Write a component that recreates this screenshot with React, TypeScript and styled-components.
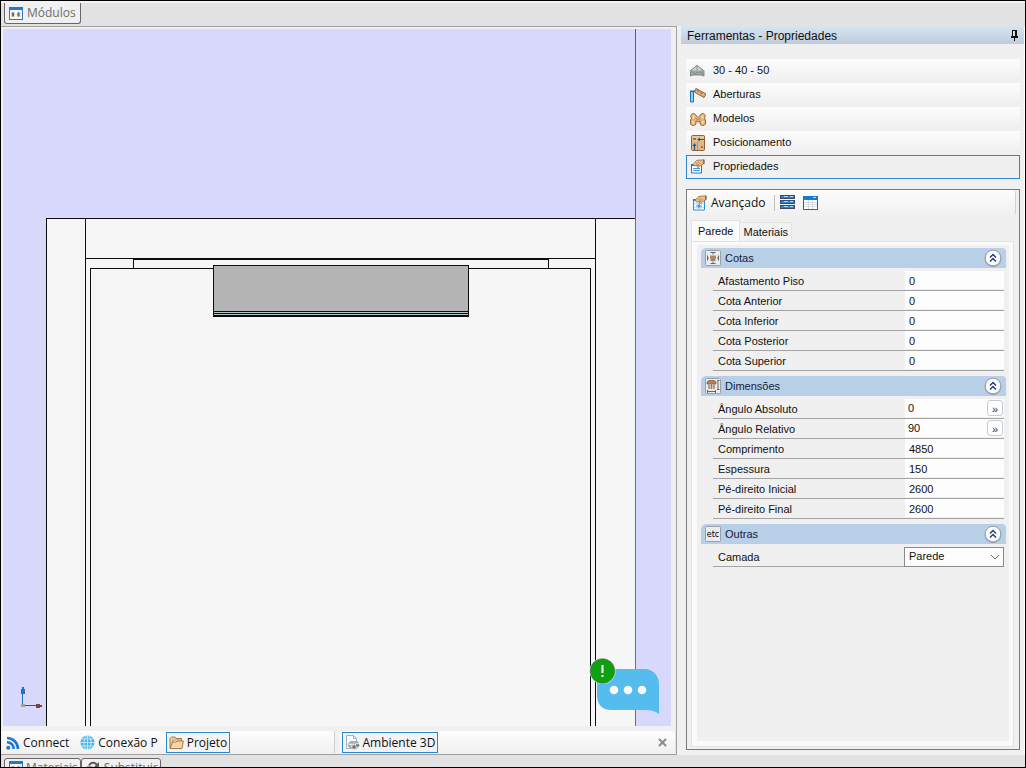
import React from 'react';
import styled, { createGlobalStyle, css } from 'styled-components';

const Global = createGlobalStyle`
  *, *::before, *::after { box-sizing: border-box; }
  body { margin: 0; color: #111; font-family: "Liberation Sans", Arial, sans-serif; font-size: 12px; }
  button, input, select { font: inherit; color: inherit; }
  h1, h2 { margin: 0; font-size: 12px; font-weight: 400; }
  svg { display: block; flex: none; }
`;

const Window = styled.div`
  display: flex;
  flex-direction: column;
  height: 100vh;
  min-height: 640px;
  overflow: hidden;
  border: 1px solid #000;
  background: #e2e2e2;
`;

const DockStrip = styled.div<{ $end?: boolean }>`
  flex: none;
  display: flex;
  gap: ${p => (p.$end ? 0 : 1)}px;
  height: ${p => (p.$end ? 12 : 25)}px;
  padding: ${p => (p.$end ? '3px 3px 0' : '0 3px 2px')};
  border-top: ${p => (p.$end ? 'none' : '2px solid #f3f3f3')};
  overflow: hidden;
`;

const DockTab = styled.button<{ $end?: boolean }>`
  display: flex;
  align-items: center;
  gap: ${p => (p.$end ? 3 : 4)}px;
  height: ${p => (p.$end ? 19 : 21)}px;
  padding: 0 ${p => (p.$end ? 2 : 4)}px 0 4px;
  border: 1px solid #6b6468;
  border-radius: ${p => (p.$end ? '3px 3px 0 0' : '0 0 3px 3px')};
  border-top-width: ${p => (p.$end ? 1 : 0)}px;
  background: #f0f0f0;
  color: #6d6d6d;
  font-family: "Open Sans", sans-serif;
  font-size: 12px;
  line-height: 16px;
  white-space: nowrap;
`;

const Main = styled.div`
  flex: 1;
  min-height: 0;
  display: flex;
`;

const Workspace = styled.main`
  flex: 1;
  min-width: 0;
  display: flex;
  flex-direction: column;
  border: solid #a0a0a0;
  border-width: 1px 1px 1px 0;
  background: #f0f0f0;
`;

const Viewport = styled.div`
  position: relative;
  flex: 1;
  min-height: 0;
  margin: 2px 5px 5px 2px;
  background: #d8d8fd;
  overflow: hidden;
  > svg { width: 100%; height: 100%; }
`;

const ChatButton = styled.button`
  position: absolute;
  right: 11px;
  bottom: 10px;
  padding: 0;
  border: 0;
  background: none;
`;

const DocBar = styled.div`
  flex: none;
  display: flex;
  height: 23px;
  gap: 4px;
`;

const DocGroup = styled.div<{ $first?: boolean }>`
  flex: 1;
  display: flex;
  align-items: center;
  padding: ${p => (p.$first ? '0 4px 0 2px' : '0 7px 0 3px')};
  gap: 5px;
  border-right: 1px solid ${p => (p.$first ? '#cfcfcf' : '#e4e4e4')};
  border-radius: 0 3px 3px 0;
  background: linear-gradient(#fdfdfd, #f0f0f0);
`;

const DocButton = styled.button<{ $active?: boolean }>`
  display: flex;
  align-items: center;
  gap: 3px;
  height: 21px;
  padding: 0 2px;
  border: 1px solid ${p => (p.$active ? '#2a86cf' : 'transparent')};
  background: ${p => (p.$active ? '#f3f3f3' : 'none')};
  font-family: "Open Sans", sans-serif;
  font-size: 12px;
  line-height: 18px;
  white-space: nowrap;
`;

const CloseButton = styled.button`
  margin-left: auto;
  padding: 1px;
  border: 0;
  background: none;
`;

const Side = styled.aside`
  flex: none;
  width: 348px;
  display: flex;
  flex-direction: column;
  padding: 0 0 5px 4px;
  border-right: 1px solid #fff;
  background: #f0f0f0;
`;

const SideHeader = styled.header`
  flex: none;
  display: flex;
  align-items: center;
  justify-content: space-between;
  height: 18px;
  padding: 0 5px 0 6px;
  background: linear-gradient(#d9e4f1, #bfcbd9);
  > h1 { line-height: 14px; padding-top: 2px; }
`;

const ToolNav = styled.nav`
  flex: none;
  display: flex;
  flex-direction: column;
  margin: 15px 4px 0 5px;
`;

const ToolLink = styled.button<{ $active?: boolean }>`
  display: flex;
  align-items: center;
  gap: 7px;
  height: 24px;
  padding: 0 3px;
  border: 1px solid transparent;
  background: linear-gradient(#fcfcfc, #efefef) border-box;
  font-size: 11px;
  line-height: 14px;
  text-align: left;
  > span { padding-bottom: 2px; }
  ${p => p.$active && css`
    border-color: #2a86cf;
    background: #f0f0f0;
  `}
`;

const Sheet = styled.section`
  flex: 1;
  min-height: 0;
  display: flex;
  flex-direction: column;
  margin: 10px 4px 0 5px;
  border: 1px solid #7a7a7a;
  padding: 0 5px 2px 4px;
`;

const Toolbar = styled.div`
  flex: none;
  display: flex;
  align-items: center;
  height: 25px;
  margin: 0 -2px 0 -4px;
  padding-left: 5px;
  border-right: 1px solid #d0d0d0;
  border-radius: 0 3px 3px 0;
  background: linear-gradient(#fdfdfd, #f0f0f0);
`;

const ToolButton = styled.button`
  display: flex;
  align-items: center;
  gap: 3px;
  margin-right: 8px;
  padding: 0;
  border: 0;
  background: none;
  font-family: "Open Sans", sans-serif;
  font-size: 12px;
  line-height: 18px;
`;

const Divider = styled.span`
  width: 1px;
  height: 16px;
  margin-right: 5px;
  background: #bdbdbd;
`;

const Tabs = styled.div`
  flex: none;
  display: flex;
  align-items: flex-end;
  height: 26px;
`;

const Tab = styled.button<{ $active?: boolean }>`
  height: ${p => (p.$active ? 21 : 19)}px;
  padding: 0 ${p => (p.$active ? 6 : 3)}px;
  border: 1px solid #e3e3e3;
  border-width: 1px 1px 0 ${p => (p.$active ? 1 : 0)}px;
  background: ${p => (p.$active ? '#fafafa' : '#f2f2f2')};
  font-size: 11px;
  line-height: 16px;
`;

const TabPage = styled.div`
  flex: 1;
  min-height: 0;
  display: flex;
  border: 1px solid #e3e3e3;
  padding: 3px 4px 5px 5px;
  background: #fafafa;
`;

const Scroller = styled.div`
  flex: 1;
  padding: 3px 3px 0 4px;
  overflow: hidden;
  background: #f0f0f0;
`;

const Group = styled.section`
  margin-bottom: 5px;
`;

const GroupHeader = styled.header`
  display: flex;
  align-items: center;
  gap: 4px;
  height: 20px;
  padding: 0 4px;
  border-radius: 5px 4px 0 0;
  background: #b8cfe8;
  > h2 { flex: 1; font-size: 11px; line-height: 18px; color: #152238; }
`;

const IconButton = styled.button`
  padding: 0;
  border: 0;
  background: none;
`;

const Rows = styled.div`
  padding: 3px 2px 0 12px;
`;

const Row = styled.div`
  display: flex;
  height: 20px;
  border-bottom: 1px solid #a3a3a3;
  > label {
    flex: 1;
    padding-left: 5px;
    font-size: 11px;
    line-height: 20px;
  }
`;

const Value = styled.div`
  display: flex;
  align-items: center;
  width: 99px;
  height: 18px;
  background: #fdfdfd;
`;

const Field = styled.input<{ $short?: boolean }>`
  flex: 1;
  min-width: 0;
  height: 18px;
  padding: ${p => (p.$short ? '0 3px' : '2px 4px 0')};
  border: 0;
  outline: 0;
  background: none;
  font-size: 11px;
`;

const MoreButton = styled.button`
  width: 16px;
  height: 16px;
  margin-right: 1px;
  padding: 0;
  border: 1px solid #c4ccd6;
  border-radius: 3px;
  background: #fdfdfd;
  color: #333;
  font-size: 11px;
  line-height: 16px;
`;

const SelectBox = styled.div`
  position: relative;
  width: 100px;
  height: 20px;
  > svg { position: absolute; right: 4px; top: 7px; pointer-events: none; }
`;

const Select = styled.select`
  appearance: none;
  width: 100%;
  height: 20px;
  padding: 0 4px 2px;
  border: 1px solid #8a8a8a;
  border-radius: 0;
  background: #fdfdfd;
  font-size: 11px;
`;

const PanelIcon = () => (
  <svg width="14" height="13" viewBox="0 0 14 13">
    <rect x="0.5" y="0.5" width="13" height="12" fill="#f8f8f8" stroke="#2b7cc8" />
    <path d="M0 0h14v3H0z" fill="#1c7ad0" />
    <path d="M2 5h4v5H2zM8 5h4v5H8z" fill="#e2e0da" />
    <ellipse cx="4" cy="7.500" rx="1.200" ry="2.200" fill="#7b6c5c" />
    <ellipse cx="9.500" cy="7.500" rx="1.200" ry="2.200" fill="#7b6c5c" />
  </svg>
);
const SwapIcon = () => (
  <svg width="15" height="14" viewBox="0 0 15 14" fill="none" stroke="#5c5c5c" strokeWidth="2">
    <path d="M3 4.500C5 1 9 1 11 4" /><path d="M13 1v5H8z" fill="#5c5c5c" stroke="none" />
    <rect x="1" y="6" width="5" height="4" fill="#c9a184" stroke="#7d5a48" strokeWidth="1" />
    <path d="M12 9c-2 4-6 4-8 1" />
  </svg>
);
const FeedIcon = () => (
  <svg width="14" height="14" viewBox="0 0 14 14" fill="none" stroke="#1b78cf" strokeWidth="2.600">
    <circle cx="2.300" cy="11.700" r="2" fill="#1b78cf" stroke="none" />
    <path d="M1 6.300A6.500 6.500 0 0 1 7.700 13M1 2A11 11 0 0 1 12 13" />
  </svg>
);
const GlobeIcon = () => (
  <svg width="15" height="15" viewBox="0 0 15 15">
    <circle cx="7.500" cy="7.500" r="7" fill="#4db4e8" />
    <g fill="none" stroke="#d8f0fc" strokeWidth="0.800">
      <ellipse cx="7.500" cy="7.500" rx="3.500" ry="7" />
      <path d="M7.500 0v15M0 7.500h15M1.500 4h12M1.500 11h12" />
    </g>
  </svg>
);
const FolderIcon = () => (
  <svg width="15" height="14" viewBox="0 0 15 14" stroke="#a9793f" strokeLinejoin="round">
    <path d="M1 12V2.500L2.500 1H6l1 1.500h5.500V12z" fill="#edcf9b" />
    <path d="M4 4h9v6H4z" fill="#fff8e8" strokeWidth="0.700" />
    <path d="M1 12.500 3.500 6H7l1-1h6.300L13 12.500z" fill="#f2d6a6" />
  </svg>
);
const SceneIcon = () => (
  <svg width="15" height="15" viewBox="0 0 15 15">
    <path d="M1.500 0.500h7l3 3v10h-10z" fill="#f7fafd" stroke="#9db4ca" />
    <path d="M8.500 0.500v3h3" fill="none" stroke="#9db4ca" />
    <path d="M3 9 6 6.500 13 7l1 4-4 3-6-2z" fill="#b4babf" stroke="#858c93" strokeWidth="0.800" />
    <path d="M3 9l6 1 5-2" stroke="#eceff1" fill="none" />
    <circle cx="9" cy="12" r="2.300" fill="#94674b" stroke="#d9dde0" />
    <path d="M11 9.500h3v1.500h-3z" fill="#2d7dc2" />
  </svg>
);
const PinIcon = () => (
  <svg width="9" height="11" viewBox="0 0 9 11" shapeRendering="crispEdges" fill="#111">
    <path d="M2 0h5v7H2zM1 6h7v2H1zM4 8h1v3H4z" /><path d="M3 1h2v5H3z" fill="#d7e0eb" />
  </svg>
);
const WallIcon = () => (
  <svg width="16" height="16" viewBox="0 0 16 16">
    <path d="M0.500 7.500 7 2l7 5.500V13l-3.500-1h-7l-3 1z" fill="#9ea59e" />
    <path d="M1.500 7 7 2.500 12.500 7 7 8z" fill="#d0d4d0" />
    <path d="M7 2.500V8M0.500 7.500 7 2.500l6.500 5" fill="none" stroke="#858c87" strokeWidth="0.900" />
    <path d="M0.500 7.500V13l3-1h7l3.500 1V7.500" fill="none" stroke="#7c837d" strokeWidth="0.900" />
    <path d="M3 9.500h1M6 9.500h1M5 11h1M9 9.500h1M11 9.500h1M12 11h1" stroke="#7c837d" />
  </svg>
);
const OpeningIcon = () => (
  <svg width="16" height="16" viewBox="0 0 16 16">
    <path d="M0.500 4.500h3V15h-3z" fill="#8ccdf2" stroke="#1b74b8" />
    <path d="M0 3.500h6V5H0z" fill="#1b74b8" />
    <path d="m6 1.500 10 5.500-2 3.500L4.500 5z" fill="#e2b57c" stroke="#80502a" strokeWidth="0.900" />
    <path d="m7 3.500 7 4.300" stroke="#97653a" strokeWidth="1.200" strokeDasharray="2 2" />
  </svg>
);
const ModelIcon = () => (
  <svg width="16" height="16" viewBox="0 0 16 16">
    <path d="M3.500 2.500C1.500 2.500.5 4 1 6l.5 1.500L.5 9v3c0 2 1.500 2.500 3 2.500s2.500-.8 2.500-2.500v-2l2 1 2-1v2c0 1.700 1 2.500 2.500 2.500s3-.5 3-2.500V9l-1-1.500L15 6c.5-2-.5-3.500-2.500-3.500C10.500 2.500 10 5 8 6.500 6 5 5.500 2.500 3.500 2.500z" fill="#e3b27a" stroke="#9b6836" />
    <path d="M3.500 4.500v3M12.500 4.500v3M3.300 10v2.500M12.700 10v2.500" stroke="#f8e1bf" strokeWidth="1.800" fill="none" />
    <path d="m5.500 7 2.500 2L10.500 7" stroke="#b98247" fill="none" />
  </svg>
);
const PositionIcon = () => (
  <svg width="16" height="16" viewBox="0 0 16 16">
    <rect x="1.500" y="0.500" width="13" height="15" rx="1" fill="#dfb888" stroke="#8f6238" />
    <path d="M2 1h12v5H2z" fill="#e9c799" />
    <path d="M3 3h3v2H3zM11 11h2v2h-2z" fill="#a27044" />
    <path d="M14 4.500H8M4.500 15v-5" stroke="#155a9c" strokeWidth="1.200" />
    <path d="M7 4.500l3-2v4zM4.500 8l-2 3h4z" fill="#155a9c" />
    <path d="M7.500 7v8" stroke="#c2905b" />
  </svg>
);
const Hand = () => (
  <>
    <path d="M3 5.500 6.500 1.500 10 1h4v3.500L11 6.500 8.500 8.500 7 8l1.500-2L5 7z" fill="#e9bf8c" stroke="#a9784a" strokeWidth="0.900" />
    <path d="M6 5 9 3M8 6l3-2" stroke="#b07f50" strokeWidth="0.700" />
    <path d="M13 0.500h1.500V5H13z" fill="#77736f" />
  </>
);
const PropsIcon = () => (
  <svg width="16" height="16" viewBox="0 0 16 16">
    <path d="M1.500 5.500h10v8.500h-10z" fill="#fff" stroke="#1b78cf" /><path d="M1 5h11v2H1z" fill="#1b78cf" />
    <path d="M3 9.500h7M3 11.500h7" stroke="#4598dc" /><Hand />
  </svg>
);
const AdvancedIcon = () => (
  <svg width="16" height="16" viewBox="0 0 16 16">
    <path d="M1.500 4.500h11v10.500h-11z" fill="#f2faff" stroke="#2c8cd8" />
    <path d="M1 4h12v2H1z" fill="#1b78cf" />
    <path d="M5 6v9M9.500 6v9M2 8.500h10M2 12.500h10" stroke="#b4dcf6" strokeWidth="0.800" />
    <path d="M7 8.500v5M4.500 11h5" stroke="#1b78cf" /><Hand />
  </svg>
);
const StackIcon = () => (
  <svg width="15" height="15" viewBox="0 0 15 15" shapeRendering="crispEdges">
    {[0, 5, 10].map(y => (
      <g key={y}>
        <path d={`M0 ${y}h15v4H0z`} fill="#45476a" />
        <path d={`M1 ${y + 1}h13v2H1z`} fill="#1b8ae0" />
        <path d={`M4 ${y + 1}h4v1H4zM10 ${y + 1}h3v1h-3z`} fill="#a4dcfa" />
      </g>
    ))}
  </svg>
);
const GridIcon = () => (
  <svg width="15" height="14" viewBox="0 0 15 14" shapeRendering="crispEdges">
    <path d="M0 0h15v14H0z" fill="#55577c" /><path d="M0 0h15v4H0z" fill="#1b7ad0" />
    <path d="M10 1h3v1h-3z" fill="#b9e3fb" /><path d="M1 4h13v9H1z" fill="#fff" />
    <path d="M5 4h1v9H5zM9 4h1v9H9zM1 6h13v1H1zM1 8h13v1H1zM1 10h13v1H1z" fill="#d5dbe3" />
  </svg>
);
const Plate = ({ children }: { children: React.ReactNode }) => (
  <svg width="16" height="16" viewBox="0 0 16 16">
    <rect x="0.500" y="0.500" width="15" height="15" rx="1" fill="#ececec" stroke="#9aa0a6" />
    {children}
  </svg>
);
const QuotaIcon = () => (
  <Plate>
    <path d="M5.500 2.500h5M8 2.500v2M5.500 13.500h5M8 11.500v2M2.500 5.500v5M2.500 8H4M13.500 5.500v5M12 8h1.500" stroke="#666" />
    <rect x="5.500" y="6" width="5" height="5" fill="#94857a" /><path d="M5 5.500h6v3H5z" fill="#b88560" />
  </Plate>
);
const SizeIcon = () => (
  <Plate>
    <path d="M2 4l2-1.500h5L11 4v2H2z" fill="#b5805a" stroke="#7a6253" strokeWidth="0.800" />
    <path d="M3 6h7v5H3z" fill="#d2c3b9" /><path d="M4 6v5M6.500 6v5M9 6v5" stroke="#8f7c70" />
    <path d="M2 13.500h9M2.500 12v3M10.500 12v3M13 2.500v9M12 2.500h2.500M12 11.500h2.500" stroke="#666" fill="none" />
  </Plate>
);
const EtcIcon = () => (
  <Plate>
    <text x="8" y="11" textAnchor="middle" fontFamily="DejaVu Sans, sans-serif" fontSize="8" fill="#000">etc</text>
  </Plate>
);
const CollapseIcon = () => (
  <svg width="18" height="18" viewBox="0 0 18 18">
    <circle cx="9" cy="9.500" r="8.400" fill="#8d99a8" /><circle cx="9" cy="9" r="7.800" fill="#fcfcfc" stroke="#98a3b0" />
    <path d="m6 8.500 3-3 3 3M6 12.500l3-3 3 3" fill="none" stroke="#23407f" strokeWidth="1.500" />
  </svg>
);

const FloorPlan = () => (
  <svg viewBox="0 0 668 697" preserveAspectRatio="xMidYMin slice" shapeRendering="crispEdges" aria-hidden="true">
    <path d="M43 189h589v508H43z" fill="#f6f6f6" />
    <g fill="#0c0c0c">
      <path d="M43 189h589v1H43zM43 189h1v508h-1zM82 189h1v508h-1zM592 189h1v508h-1z" />
      <path d="M82 229h511v1H82zM130 229h416v2H130zM130 229h1v11h-1zM545 229h1v11h-1z" />
      <path d="M87 239h501v1H87zM87 239h1v458h-1zM587 239h1v458h-1z" />
      <path d="M210 236h256v52H210z" />
    </g>
    <path d="M211 237h254v45H211z" fill="#b4b4b4" />
    <path d="M211 283h254v1H211zM211 285h254v1H211z" fill="#b7c6c8" />
    <path d="M632 0h1v189h-1z" fill="#4a6e5c" />
    <path d="M632 189h1v508h-1z" fill="#2f9a3c" />
    <path d="M19 663h1v14h-1zM18 660h4v5h-4zM19 658h2v2h-2z" fill="#2272bd" />
    <path d="M20 676h14v1H20zM33 675h4v4h-4zM37 676h2v2h-2z" fill="#74463f" />
    <path d="M18 675h4v3h-4z" fill="#a0a0a0" />
  </svg>
);

const ChatIcon = () => (
  <svg width="72" height="58" viewBox="0 0 72 58">
    <path d="M22 11h35c8 0 14 7 14 15v30c-4-3-8-4-13-4H23C14 52 9 46 9 37V25c0-8 6-14 13-14z" fill="#55bdee" />
    <g fill="#fafafa"><circle cx="26" cy="32" r="4.300" /><circle cx="40" cy="32" r="4.300" /><circle cx="54" cy="32" r="4.300" /></g>
    <circle cx="14.500" cy="13" r="13" fill="#e8f4e8" /><circle cx="14.500" cy="13" r="12.300" fill="#0fa012" stroke="#4f6b4f" strokeWidth="0.600" />
    <path d="M13.500 7h2v8h-2zM13.500 17h2v2h-2z" fill="#f4fff4" />
  </svg>
);

const tools = [
  { name: '30 - 40 - 50', Icon: WallIcon },
  { name: 'Aberturas', Icon: OpeningIcon },
  { name: 'Modelos', Icon: ModelIcon },
  { name: 'Posicionamento', Icon: PositionIcon },
  { name: 'Propriedades', Icon: PropsIcon, active: true },
];

type Item = { label: string; value: string; more?: boolean; options?: string[] };
const groups: { title: string; Icon: () => React.JSX.Element; items: Item[] }[] = [
  {
    title: 'Cotas', Icon: QuotaIcon, items: [
      { label: 'Afastamento Piso', value: '0' },
      { label: 'Cota Anterior', value: '0' },
      { label: 'Cota Inferior', value: '0' },
      { label: 'Cota Posterior', value: '0' },
      { label: 'Cota Superior', value: '0' },
    ],
  },
  {
    title: 'Dimensões', Icon: SizeIcon, items: [
      { label: 'Ângulo Absoluto', value: '0', more: true },
      { label: 'Ângulo Relativo', value: '90', more: true },
      { label: 'Comprimento', value: '4850' },
      { label: 'Espessura', value: '150' },
      { label: 'Pé-direito Inicial', value: '2600' },
      { label: 'Pé-direito Final', value: '2600' },
    ],
  },
  { title: 'Outras', Icon: EtcIcon, items: [{ label: 'Camada', value: 'Parede', options: ['Parede'] }] },
];

function PropertyRow({ item }: { item: Item }) {
  const id = React.useId();
  return (
    <Row>
      <label htmlFor={id}>{item.label}</label>
      {item.options ? (
        <SelectBox>
          <Select id={id} defaultValue={item.value}>
            {item.options.map(o => <option key={o}>{o}</option>)}
          </Select>
          <svg width="10" height="6" viewBox="0 0 10 6"><path d="m1 1 4 4 4-4" fill="none" stroke="#666" /></svg>
        </SelectBox>
      ) : (
        <Value>
          <Field id={id} defaultValue={item.value} $short={item.more} />
          {item.more && <MoreButton>»</MoreButton>}
        </Value>
      )}
    </Row>
  );
}

export default function App() {
  return (
    <>
      <Global />
      <Window>
        <DockStrip>
          <DockTab><PanelIcon />Módulos</DockTab>
        </DockStrip>
        <Main>
          <Workspace>
            <Viewport>
              <FloorPlan />
              <ChatButton aria-label="Chat"><ChatIcon /></ChatButton>
            </Viewport>
            <DocBar>
              <DocGroup $first>
                <DocButton><FeedIcon />Connect</DocButton>
                <DocButton><GlobeIcon />Conexão P</DocButton>
                <DocButton $active><FolderIcon />Projeto</DocButton>
              </DocGroup>
              <DocGroup>
                <DocButton $active><SceneIcon />Ambiente 3D</DocButton>
                <CloseButton aria-label="Fechar">
                  <svg width="9" height="9" viewBox="0 0 9 9"><path d="m1 1 7 7M8 1 1 8" stroke="#8c8c8c" strokeWidth="2" /></svg>
                </CloseButton>
              </DocGroup>
            </DocBar>
          </Workspace>
          <Side>
            <SideHeader><h1>Ferramentas - Propriedades</h1><PinIcon /></SideHeader>
            <ToolNav>
              {tools.map(({ name, Icon, active }) => (
                <ToolLink key={name} $active={active}><Icon /><span>{name}</span></ToolLink>
              ))}
            </ToolNav>
            <Sheet>
              <Toolbar>
                <ToolButton><AdvancedIcon />Avançado</ToolButton>
                <Divider />
                <ToolButton aria-label="Lista"><StackIcon /></ToolButton>
                <ToolButton aria-label="Tabela"><GridIcon /></ToolButton>
              </Toolbar>
              <Tabs role="tablist">
                <Tab role="tab" aria-selected $active>Parede</Tab>
                <Tab role="tab" aria-selected={false}>Materiais</Tab>
              </Tabs>
              <TabPage role="tabpanel">
                <Scroller>
                  {groups.map(({ title, Icon, items }) => (
                    <Group key={title}>
                      <GroupHeader>
                        <Icon />
                        <h2>{title}</h2>
                        <IconButton aria-label="Recolher"><CollapseIcon /></IconButton>
                      </GroupHeader>
                      <Rows>{items.map(i => <PropertyRow key={i.label} item={i} />)}</Rows>
                    </Group>
                  ))}
                </Scroller>
              </TabPage>
            </Sheet>
          </Side>
        </Main>
        <DockStrip $end>
          <DockTab $end><PanelIcon />Materiais</DockTab>
          <DockTab $end><SwapIcon />Substituir</DockTab>
        </DockStrip>
      </Window>
    </>
  );
}
